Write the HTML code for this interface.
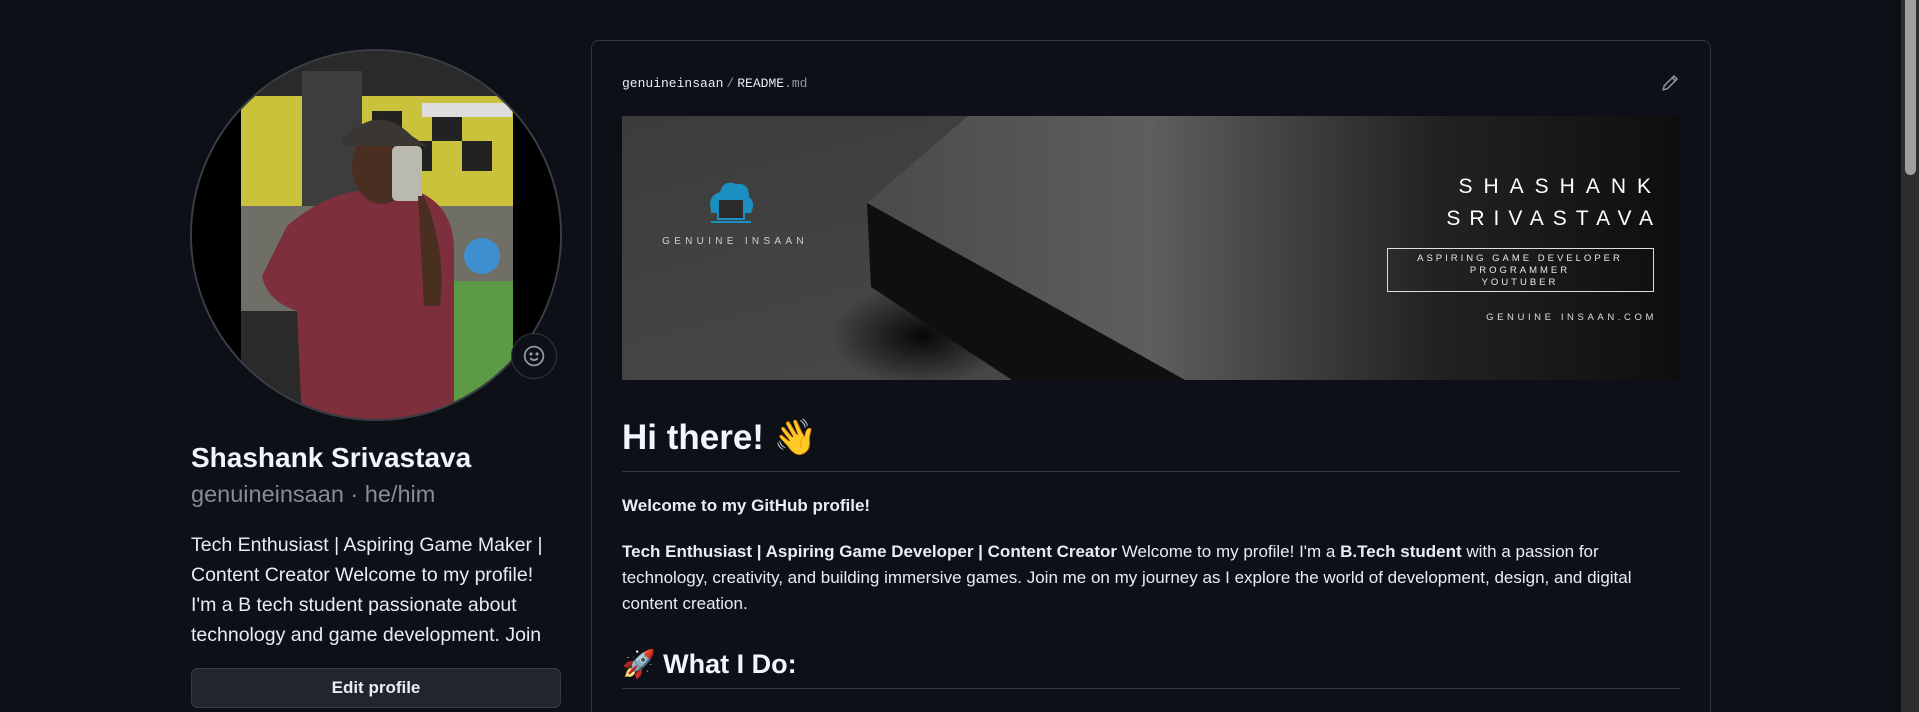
<!DOCTYPE html>
<html style="width:1919px;height:712px;overflow:hidden"><head><meta charset="utf-8"><style>
*{margin:0;padding:0;box-sizing:border-box}
body{width:1919px;height:712px;background:#0d1117;overflow:hidden;position:relative;font-family:"Liberation Sans","DejaVu Sans",sans-serif;color:#e6edf3}
.abs{position:absolute}
.av{left:190px;top:49px;width:372px;height:372px;border-radius:50%;overflow:hidden;background:#000;border:2px solid #3a3f46}
.smile{left:511px;top:333px;width:46px;height:46px;border-radius:50%;background:#0d1117;border:1px solid #30363d;display:flex;align-items:center;justify-content:center}
.name{left:191px;top:442px;font-size:28px;font-weight:bold;color:#f0f6fc}
.user{left:191px;top:481px;font-size:23.5px;color:#848d97}
.bio{left:191px;top:530px;font-size:19.5px;line-height:30px;width:400px;color:#e6edf3;white-space:nowrap}
.btn{left:191px;top:668px;width:370px;height:40px;background:#21262d;border:1px solid #363b42;border-radius:7px;font-size:17px;font-weight:bold;text-align:center;line-height:38px}
.clip{left:0;top:0;width:1919px;height:712px;overflow:hidden}
.card{left:591px;top:40px;width:1120px;height:700px;border:1px solid #30363d;border-radius:8px}
.path{left:622px;top:76px;font-family:"Liberation Mono",monospace;font-size:13px;color:#e6edf3}
.banner{left:622px;top:116px;width:1058px;height:264px;overflow:hidden}
h1{position:absolute;left:622px;top:417px;font-size:35px;font-weight:bold;color:#f0f6fc}
.hr{position:absolute;left:622px;width:1058px;height:1px;background:#30363d}
.p{position:absolute;left:622px;font-size:17px;line-height:26px;width:1058px}
h2{position:absolute;left:622px;top:648px;font-size:27px;font-weight:bold;color:#f0f6fc}
.sb{left:1901px;top:0;width:18px;height:712px;background:#2e2e2e}
.th{left:1905px;top:0;width:11px;height:175px;background:#9f9f9f;border-radius:0 0 6px 6px}
</style></head><body>
<div class="abs clip">
<div class="abs av">
<svg width="372" height="372" viewBox="0 0 372 372">
<rect x="0" y="0" width="372" height="372" fill="#000"/>
<rect x="49" y="0" width="272" height="372" fill="#4a4a46"/>
<rect x="49" y="0" width="272" height="45" fill="#2a2a2a"/>
<rect x="49" y="45" width="272" height="110" fill="#c9c23a"/>
<rect x="180" y="60" width="30" height="30" fill="#222"/><rect x="240" y="60" width="30" height="30" fill="#222"/><rect x="210" y="90" width="30" height="30" fill="#222"/><rect x="270" y="90" width="30" height="30" fill="#222"/>
<rect x="110" y="20" width="60" height="300" fill="#3d3d3d"/>
<rect x="230" y="52" width="90" height="14" fill="#ddd"/>
<rect x="49" y="155" width="272" height="130" fill="#6f6f68"/>
<rect x="230" y="230" width="91" height="142" fill="#5d9a45"/>
<rect x="49" y="260" width="60" height="112" fill="#2a2a2a"/>
<circle cx="290" cy="205" r="18" fill="#3f8fd0"/>
<path d="M95 175 Q130 145 165 140 L225 140 Q262 155 262 200 L262 372 L110 372 L105 260 Q75 250 70 225 Z" fill="#7e2f3c"/>
<ellipse cx="190" cy="115" rx="30" ry="38" fill="#4a2e22"/>
<path d="M150 90 Q185 50 220 85 L235 95 L150 95 Z" fill="#3a3633"/>
<rect x="200" y="95" width="30" height="55" rx="5" fill="#b9b9b0"/>
<path d="M232 145 Q255 200 248 255 L232 255 L226 145 Z" fill="#4a2e22"/>
</svg>
</div>
<div class="abs smile"><svg width="22" height="22" viewBox="0 0 16 16" fill="none" stroke="#9198a1" stroke-width="1.3"><circle cx="8" cy="8" r="6.8"/><circle cx="5.8" cy="6.5" r=".5" fill="#9198a1"/><circle cx="10.2" cy="6.5" r=".5" fill="#9198a1"/><path d="M5.2 9.6Q8 12.3 10.8 9.6"/></svg></div>
<div class="abs name">Shashank Srivastava</div>
<div class="abs user">genuineinsaan · he/him</div>
<div class="abs bio">Tech Enthusiast | Aspiring Game Maker |<br>Content Creator Welcome to my profile!<br>I'm a B tech student passionate about<br>technology and game development. Join</div>
<div class="abs btn">Edit profile</div>

<div class="abs card"></div>
<div class="abs path">genuineinsaan<span style="color:#8d96a0;margin:0 3px">/</span>README<span style="color:#8d96a0">.md</span></div>
<svg class="abs" style="left:1661px;top:74px" width="18" height="18" viewBox="0 0 16 16" fill="none" stroke="#9198a1" stroke-width="1.3"><path d="M11.5 1.8l2.7 2.7-8.7 8.7-3.5.8.8-3.5z M10 3.3l2.7 2.7"/></svg>

<div class="abs banner">
<svg width="1058" height="264" viewBox="0 0 1058 264">
<defs>
<linearGradient id="bg" x1="0" y1="0" x2="1" y2="1"><stop offset="0" stop-color="#3c3c3c"/><stop offset="1" stop-color="#4d4d4d"/></linearGradient>
<linearGradient id="tp" x1="0" y1="0" x2="1" y2="0"><stop offset="0" stop-color="#4a4a4a"/><stop offset=".35" stop-color="#5e5e5e"/><stop offset=".7" stop-color="#222"/><stop offset="1" stop-color="#0e0e0e"/></linearGradient>
<radialGradient id="sh" cx="0.5" cy="0.5" r="0.5"><stop offset="0" stop-color="#000" stop-opacity=".9"/><stop offset="1" stop-color="#000" stop-opacity="0"/></radialGradient>
</defs>
<rect width="1058" height="264" fill="url(#bg)"/>
<polygon points="346,0 1058,0 1058,264 563,264 245,87" fill="url(#tp)"/>
<ellipse cx="300" cy="220" rx="90" ry="50" fill="url(#sh)"/>
<polygon points="245,87 249,171 390,264 563,264" fill="#0f0f0f"/>
<g transform="translate(109,86)" fill="#1a8fc0">
<path d="M-20 8 Q-24 -6 -11 -10 Q-7 -23 5 -18 Q18 -20 18 -5 Q25 0 20 11 L-20 11 Z"/>
<rect x="-13" y="-3" width="26" height="20" fill="#2a2a2a" stroke="#1a8fc0" stroke-width="2"/>
<rect x="-20" y="19" width="40" height="2"/>
</g>
<text x="113" y="128" fill="#d0d0d0" font-size="10" letter-spacing="4.3" text-anchor="middle" font-family="Liberation Sans">GENUINE INSAAN</text>
<text x="1040" y="77" fill="#fff" font-size="21" letter-spacing="11" text-anchor="end" font-family="Liberation Sans">SHASHANK</text>
<text x="1040" y="109" fill="#fff" font-size="21" letter-spacing="9" text-anchor="end" font-family="Liberation Sans">SRIVASTAVA</text>
<rect x="765.5" y="132.5" width="266" height="43" fill="none" stroke="#ddd" stroke-width="1"/>
<g fill="#e8e8e8" font-size="9.5" letter-spacing="3" text-anchor="middle" font-family="Liberation Sans">
<text x="898" y="145">ASPIRING GAME DEVELOPER</text>
<text x="898" y="157">PROGRAMMER</text>
<text x="898" y="169">YOUTUBER</text>
</g>
<text x="1035" y="204" fill="#ddd" font-size="9.5" letter-spacing="3.6" text-anchor="end" font-family="Liberation Sans">GENUINE INSAAN.COM</text>
</svg>
</div>

<h1>Hi there! 👋</h1>
<div class="hr" style="top:471px"></div>
<div class="p" style="top:493px;font-weight:bold">Welcome to my GitHub profile!</div>
<div class="p" style="top:539px"><b>Tech Enthusiast | Aspiring Game Developer | Content Creator</b> Welcome to my profile! I'm a <b>B.Tech student</b> with a passion for technology, creativity, and building immersive games. Join me on my journey as I explore the world of development, design, and digital content creation.</div>
<h2>🚀 What I Do:</h2>
<div class="hr" style="top:688px"></div>

<div class="abs sb"></div>
<div class="abs th"></div>
</div>
</body></html>
